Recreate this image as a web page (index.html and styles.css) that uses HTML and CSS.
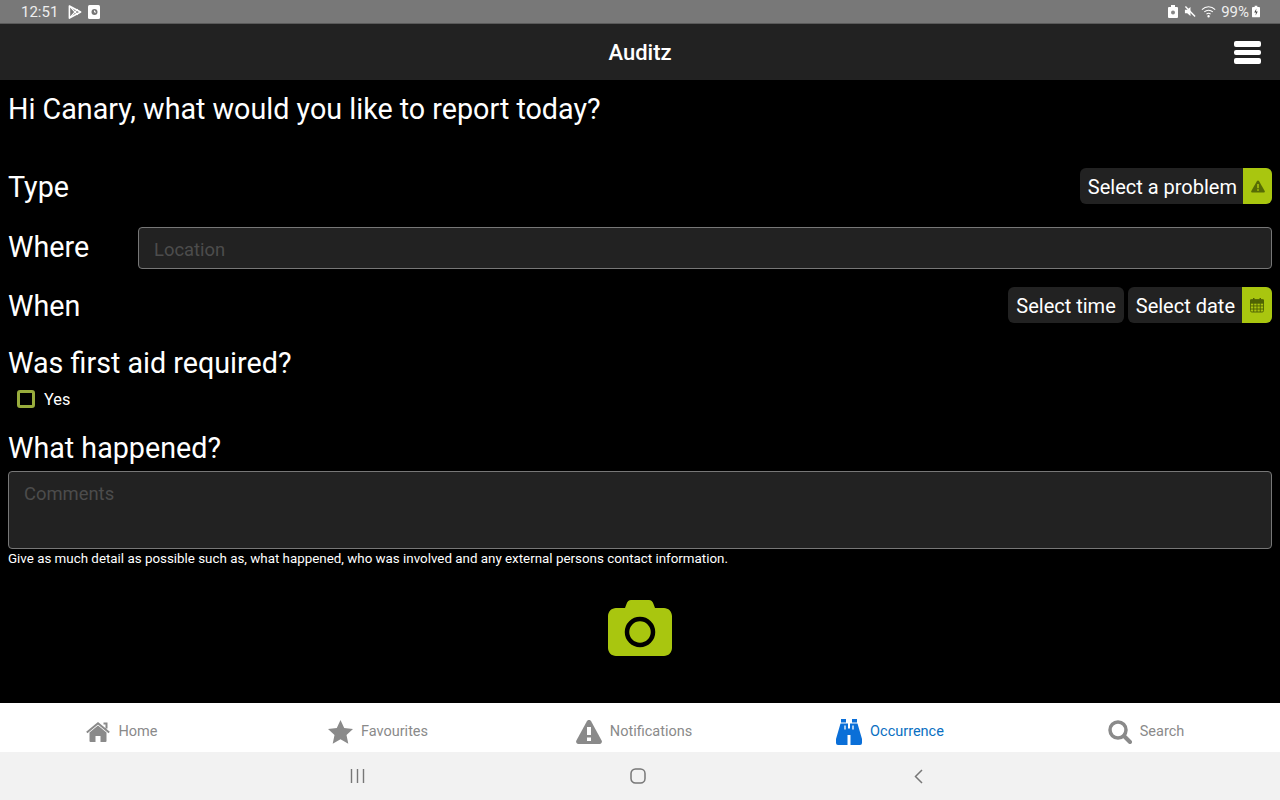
FILE: index.html
```html
<!DOCTYPE html>
<html lang="en">
<head>
    <meta charset="UTF-8">
    <meta name="viewport" content="width=device-width, initial-scale=1.0">
    <title>Auditz</title>
    <link rel="stylesheet" href="styles.css">
</head>
<body>
    <div class="status-bar">
        <div class="status-group">
            <span class="clock">12:51</span>
            <svg class="status-icon" width="14" height="16" viewBox="0 0 15 16" fill="none" stroke="#fff"><path d="M1.500 1.500l12 6.500-12 6.500z" stroke-width="1.700" stroke-linejoin="round"/><path d="M1.500 1.500l6 6.500-6 6.500M7.500 8l3-3M7.500 8l3 3" stroke-width="1.200"/></svg>
            <svg class="status-icon" width="12" height="14" viewBox="0 0 12 14"><rect width="12" height="14" rx="1.500" fill="#fff"/><circle cx="6.500" cy="7" r="3" fill="#777"/><path d="M6.500 5.500v1.600h1.500" stroke="#fff" fill="none"/></svg>
        </div>
        <div class="status-group status-right">
            <svg class="icon-lock" width="10" height="13" viewBox="0 0 10 13"><path d="M3 0h4v2h2a1 1 0 0 1 1 1v9a1 1 0 0 1-1 1H1a1 1 0 0 1-1-1V3a1 1 0 0 1 1-1h2z" fill="#fff"/><circle cx="5" cy="7.500" r="2" fill="#888"/></svg>
            <svg class="icon-mute" width="12" height="13" viewBox="0 0 13 13"><path d="M1 4.500h2.500L7 1.500v10L3.500 8.500H1z" fill="#fff"/><path d="M1.500 1l10.500 11" stroke="#fff" stroke-width="1.500"/></svg>
            <svg class="icon-wifi" width="17" height="13" viewBox="0 0 18 13" fill="none" stroke="#fff" stroke-width="1.100"><path d="M1 4.500c4-4 10-4 14 0"/><path d="M3.500 7c2.500-2.500 6.500-2.500 9 0"/><path d="M5.800 9.300c1.300-1.200 3.100-1.200 4.400 0"/><circle cx="8" cy="11.500" r=".7" fill="#fff"/></svg>
            <span class="battery-text">99%</span>
            <svg class="icon-battery" width="8" height="13" viewBox="0 0 9 13"><path d="M3 0h3v1.500h2a1 1 0 0 1 1 1V12a1 1 0 0 1-1 1H1a1 1 0 0 1-1-1V2.500a1 1 0 0 1 1-1h2z" fill="#fff"/><path d="M5 3L2.500 7.500h2L4 11l2.500-4.500h-2z" fill="#444"/></svg>
        </div>
    </div>

    <header class="app-bar">
        <h1 class="app-title">Auditz</h1>
        <div class="menu-icon"><span></span><span></span><span></span></div>
    </header>

    <main class="content">
        <p class="greeting">Hi Canary, what would you like to report today?</p>

        <div class="row row-type">
            <label class="label label-row">Type</label>
            <div class="picker">
                <span class="picker-text picker-text-problem">Select a problem</span>
                <span class="picker-icon">
                    <svg width="14" height="13" viewBox="0 0 14 13"><path d="M7 .5c.5 0 .8.300 1 .6l5.700 9.800c.4.700-.1 1.600-1 1.600H1.300c-.9 0-1.400-.9-1-1.600L6 1.100c.2-.3.500-.6 1-.6z" fill="#566b05"/><rect x="6.200" y="4" width="1.600" height="4.200" fill="#a9c30d"/><rect x="6.200" y="9.200" width="1.600" height="1.600" fill="#a9c30d"/></svg>
                </span>
            </div>
        </div>

        <div class="row row-where">
            <label class="label label-where">Where</label>
            <input class="field" type="text" placeholder="Location">
        </div>

        <div class="row row-when">
            <label class="label label-row">When</label>
            <div class="picker-group">
                <div class="picker"><span class="picker-text">Select time</span></div>
                <div class="picker">
                    <span class="picker-text picker-text-date">Select date</span>
                    <span class="picker-icon picker-icon-date">
                        <svg width="14" height="16" viewBox="0 0 15 16" fill="none" stroke="#4f6204"><rect x=".5" y="2.500" width="14" height="13" rx="1.500" fill="#a9c30d"/><path d="M.5 2.500h14v3.500H.5z" fill="#4f6204"/><path d="M.5 9h14M.5 12.300h14M4 6v9.500M7.500 6v9.500M11 6v9.500"/><path d="M4 .5v3M11 .5v3" stroke-width="1.600"/></svg>
                    </span>
                </div>
            </div>
        </div>

        <h2 class="label label-aid">Was first aid required?</h2>
        <label class="check-row">
            <span class="checkbox"></span>
            <span class="check-text">Yes</span>
        </label>

        <h2 class="label label-what">What happened?</h2>
        <textarea class="field comments" placeholder="Comments"></textarea>
        <p class="hint">Give as much detail as possible such as, what happened, who was involved and any external persons contact information.</p>

        <div class="camera">
            <svg width="64" height="56" viewBox="0 0 64 56"><path d="M8 8h9l1.500-4C19.300 1.500 21 0 23 0h18c2 0 3.700 1.500 4.500 4L47 8h9c4.400 0 8 3.600 8 8v32c0 4.400-3.600 8-8 8H8c-4.400 0-8-3.600-8-8V16c0-4.400 3.600-8 8-8z" fill="#a9c60f"/><circle cx="32" cy="32" r="13" fill="none" stroke="#000" stroke-width="4.500"/></svg>
        </div>
    </main>

    <nav class="tabs">
        <a class="tab">
            <svg width="24" height="20" viewBox="0 0 24 20"><path d="M12 3.500L3.500 10.500V19a1 1 0 0 0 1 1H9.500v-6h5v6h5a1 1 0 0 0 1-1v-8.500z" fill="#8a8a8a"/><path d="M.8 10.500L12 1.300l11.200 9.200M17.500 1.500h3v5" fill="none" stroke="#8a8a8a" stroke-width="2"/></svg>
            <span>Home</span>
        </a>
        <a class="tab">
            <svg width="25" height="24" viewBox="0 0 25 24"><path d="M12.500 0l3.700 8 8.800 1-6.500 6 1.800 8.700-7.800-4.400-7.800 4.400L6.500 15 0 9l8.800-1z" fill="#8a8a8a"/></svg>
            <span>Favourites</span>
        </a>
        <a class="tab">
            <svg width="26" height="24" viewBox="0 0 26 24"><path d="M13 0c1 0 1.600.5 2.100 1.300l10.500 19.200c.8 1.500-.2 3.500-2 3.500H2.400c-1.800 0-2.800-2-2-3.500L10.900 1.300C11.400.5 12 0 13 0z" fill="#8a8a8a"/><rect x="11" y="7" width="4" height="8" fill="#fff"/><rect x="11" y="17.500" width="4" height="3.500" fill="#fff"/></svg>
            <span>Notifications</span>
        </a>
        <a class="tab tab-active">
            <svg width="26" height="26" viewBox="0 0 26 26"><path d="M5 0h5v3.500H5zM16 0h5v3.500h-5zM4.500 4.500h7.500v5h2v-5h7.500L26 20v4a2 2 0 0 1-2 2h-9.500v-10h-3v10H2a2 2 0 0 1-2-2v-4z" fill="#0a6fd8"/><path d="M9 6.500v4" stroke="#fff" stroke-width="1.300"/><path d="M17 6.500v4" stroke="#fff" stroke-width="1.300"/></svg>
            <span>Occurrence</span>
        </a>
        <a class="tab">
            <svg width="24" height="24" viewBox="0 0 24 24" fill="none" stroke="#8a8a8a"><circle cx="10" cy="10" r="8" stroke-width="3.500"/><path d="M16 16l6 6" stroke-width="4" stroke-linecap="round"/></svg>
            <span>Search</span>
        </a>
    </nav>

    <div class="system-nav">
        <svg width="15" height="14" viewBox="0 0 15 14" stroke="#777" stroke-width="1.400"><path d="M1.500 0v14M7.500 0v14M13.500 0v14"/></svg>
        <svg class="nav-home" width="16" height="16" viewBox="0 0 16 16" fill="none" stroke="#777" stroke-width="1.500"><rect x="1" y="1" width="14" height="14" rx="4.500"/></svg>
        <svg width="9" height="15" viewBox="0 0 9 15" fill="none" stroke="#777" stroke-width="1.500"><path d="M8 1L1.500 7.500 8 14"/></svg>
    </div>
</body>
</html>
```

FILE: styles.css
```css
* {
    box-sizing: border-box;
}

html, body {
    height: 100%;
}

body {
    margin: 0;
    height: 800px;
    overflow: hidden;
    display: flex;
    flex-direction: column;
    background: #000;
    color: #fff;
    font-family: Roboto, "Liberation Sans", sans-serif;
}

.status-bar {
    height: 24px;
    flex: none;
    display: flex;
    justify-content: space-between;
    align-items: center;
    padding: 0 20px 0 21px;
    background: #787878;
    border-bottom: 1px solid #5a5a5a;
}

.status-group {
    display: flex;
    align-items: center;
    gap: 6px;
}

.clock {
    font-size: 15px;
    color: #eee;
    margin-right: 4px;
}

.status-right {
    gap: 5px;
}

.icon-mute {
    margin-left: 1px;
}

.battery-text {
    font-size: 15px;
    color: #eee;
    margin-left: -2px;
}

.icon-battery {
    margin-left: -2px;
}

.app-bar {
    height: 56px;
    flex: none;
    position: relative;
    display: flex;
    align-items: center;
    justify-content: center;
    padding-top: 1px;
    background: #222;
}

.app-title {
    margin: 0;
    font-size: 22px;
    font-weight: 500;
}

.menu-icon {
    position: absolute;
    right: 19px;
    top: 17px;
    width: 27px;
    display: flex;
    flex-direction: column;
    gap: 3px;
}

.menu-icon span {
    height: 5.500px;
    background: #fff;
    border-radius: 2px;
}

.content {
    flex: 1;
    display: flex;
    flex-direction: column;
    padding: 0 8px;
    background: #000;
}

.greeting {
    margin: 13px 0 0;
    font-size: 28.700px;
    line-height: 32px;
}

.row {
    display: flex;
    align-items: center;
    justify-content: space-between;
}

.row-type {
    margin-top: 43px;
}

.row-where {
    margin-top: 23px;
}

.row-when {
    margin-top: 18px;
}

.label {
    margin: 0;
    font-size: 28.700px;
    font-weight: 400;
    line-height: 32px;
}

.label-row {
    padding-top: 2px;
}

.label-where {
    width: 130px;
    flex: none;
    padding-bottom: 2px;
}

.label-aid {
    margin-top: 24px;
}

.label-what {
    margin-top: 23px;
}

.picker-group {
    display: flex;
    gap: 4px;
}

.picker {
    height: 36px;
    display: flex;
    align-items: center;
    border-radius: 6px;
    background: #222;
    overflow: hidden;
}

.picker-text {
    padding: 2px 8px 0;
    font-size: 20px;
}

.picker-text-problem {
    padding-right: 6px;
}

.picker-text-date {
    padding-right: 7px;
}

.picker-icon {
    width: 29px;
    height: 36px;
    display: flex;
    align-items: center;
    justify-content: center;
    background: #a9c60f;
}

.picker-icon-date {
    width: 30px;
}

.field {
    display: block;
    width: 100%;
    border: 1px solid #777;
    border-radius: 4px;
    background: #222;
    color: #fff;
    font-family: inherit;
    font-size: 18.400px;
    padding: 0 15px;
    outline: none;
}

.field::placeholder {
    color: #4c4c4c;
    opacity: 1;
}

.row-where .field {
    height: 42px;
    padding-top: 2px;
}

.check-row {
    display: flex;
    align-items: center;
    margin: 10px 0 0 9px;
    height: 20px;
}

.checkbox {
    width: 18px;
    height: 18px;
    border: 3px solid #98ac3c;
    border-radius: 3px;
}

.check-text {
    margin-left: 9px;
    font-size: 16.300px;
}

.comments {
    height: 78px;
    margin-top: 7px;
    padding-top: 11px;
    resize: none;
}

.hint {
    margin: 2px 0 0;
    font-size: 13.370px;
    line-height: 16px;
}

.camera {
    display: flex;
    justify-content: center;
    margin-top: 33px;
}

.tabs {
    height: 49px;
    flex: none;
    display: grid;
    grid-template-columns: repeat(5, 1fr);
    background: #fff;
}

.tab {
    display: flex;
    align-items: center;
    justify-content: center;
    gap: 8px;
    padding: 8px 12px 0 0;
    color: #8a8a8a;
    font-size: 14.500px;
}

.tab-active {
    color: #0a6fc2;
}

.system-nav {
    height: 48px;
    flex: none;
    background: #f2f2f2;
    padding: 0 357px 0 350px;
    display: flex;
    align-items: center;
    justify-content: space-between;
}

.nav-home {
    margin-right: 3px;
}
```
